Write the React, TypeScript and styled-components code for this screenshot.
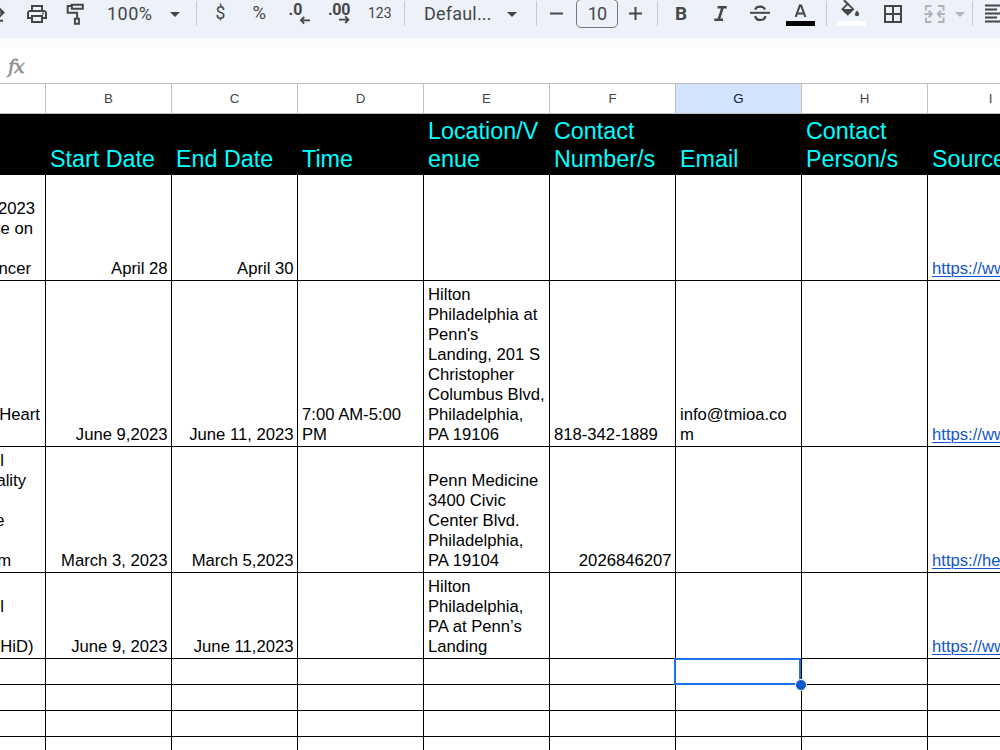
import React from 'react';
import styled, { createGlobalStyle } from 'styled-components';
import { MdOutlinePrint } from 'react-icons/md';

const INK = '#444746';

const GlobalStyle = createGlobalStyle`
  body { margin: 0; background: #fff; overflow: hidden; }
  * { box-sizing: border-box; }
`;

const Page = styled.div`
  width: 1000px;
  height: 750px;
  overflow: hidden;
  display: flex;
  flex-direction: column;
  background: #fff;
  font-family: 'Liberation Sans', Arial, sans-serif;
`;

const Toolbar = styled.div`
  height: 38px;
  flex: none;
  display: flex;
  background: #edf1fa;
  color: ${INK};
  font-family: Roboto, sans-serif;
`;

const Slot = styled.div<{ $w: number; $pad?: number }>`
  width: ${(p) => p.$w}px;
  padding-left: ${(p) => p.$pad ?? 0}px;
  height: 27px;
  flex: none;
  display: flex;
  align-items: center;
  white-space: nowrap;
`;

const Label = styled.span<{ $size: number; $track?: number; $bold?: boolean }>`
  font-size: ${(p) => p.$size}px;
  line-height: 27px;
  letter-spacing: ${(p) => p.$track ?? 0}px;
  font-weight: ${(p) => (p.$bold ? 700 : 400)};
`;

const Divider = styled.div`
  width: 1px;
  height: 25px;
  margin-top: 1px;
  flex: none;
  background: #c7c9cc;
`;

const Glyph = styled.svg`
  display: block;
  flex: none;
`;

const SizeBox = styled.div`
  width: 42px;
  height: 29px;
  margin-top: -1px;
  flex: none;
  display: flex;
  align-items: center;
  justify-content: center;
  border: 1px solid #747775;
  border-radius: 5px;
`;

const Strip = styled.div`
  height: 10px;
  flex: none;
  background: #f9fbfd;
`;

const FormulaBar = styled.div`
  height: 35px;
  flex: none;
  padding: 2px 0 0 8px;
  display: flex;
  align-items: center;
  color: #8b8e8c;
  font: italic 19px/33px 'DejaVu Serif', serif;
  letter-spacing: -1px;
  -webkit-text-stroke: 0.5px #8b8e8c;
`;

const Grid = styled.div`
  width: 1054px;
  flex: none;
  display: grid;
  grid-template-columns: 46px repeat(8, 126px);
`;

const ColumnHead = styled.div<{ $active?: boolean }>`
  height: 31px;
  border: solid #c0c0c0;
  border-width: 1px 1px 1px 0;
  display: flex;
  align-items: center;
  justify-content: center;
  font: 13.33px/29px 'Liberation Sans', Arial, sans-serif;
  color: ${(p) => (p.$active ? '#041e49' : INK)};
  background: ${(p) => (p.$active ? '#d3e3fd' : '#fff')};
`;

const TitleCell = styled.div`
  height: 61px;
  padding: 0 0 2px 4px;
  display: flex;
  flex-direction: column;
  justify-content: flex-end;
  background: #000;
  color: #0ff;
  font-size: 23.33px;
  line-height: 28px;
  white-space: pre;
`;

const Cell = styled.div<{ $h: number; $right?: boolean }>`
  position: relative;
  height: ${(p) => p.$h}px;
  padding: 0 3.5px 1px 4px;
  border: solid #000;
  border-width: 0 1px 1px 0;
  display: flex;
  flex-direction: column;
  justify-content: flex-end;
  align-items: ${(p) => (p.$right ? 'flex-end' : 'flex-start')};
  color: #000;
  font-size: 16.67px;
  line-height: 20px;
  white-space: pre;
`;

const ClippedCell = styled(Cell)`
  padding-left: 0;
  padding-right: 0;
  align-items: flex-end;
  overflow: hidden;
`;

const ClippedLine = styled.div<{ $gap: number }>`
  height: 20px;
  margin-right: ${(p) => p.$gap}px;
`;

const Link = styled.span`
  color: #1155cc;
  text-decoration: underline;
  text-decoration-thickness: 1px;
  text-underline-offset: 2px;
`;

const Selection = styled.div`
  position: absolute;
  z-index: 1;
  left: -2px;
  top: -1px;
  width: 127px;
  height: 27px;
  border: 2px solid #1a73e8;
`;

const Handle = styled.div`
  position: absolute;
  right: -8px;
  bottom: -8px;
  width: 12px;
  height: 12px;
  border: 1px solid #fff;
  border-radius: 50%;
  background: #0b57d0;
`;

type IconProps = { x: number; w: number; children: React.ReactNode };
const Icon = ({ x, w, children }: IconProps) => (
  <Glyph width={w} height={38} viewBox={`${x} 0 ${w} 38`} fill="none" stroke={INK} strokeWidth={2}>
    {children}
  </Glyph>
);

const Caret = ({ x, w, left, color = INK }: { x: number; w: number; left: number; color?: string }) => (
  <Icon x={x} w={w}>
    <path d={`M${left} 12h10l-5 5z`} fill={color} stroke="none" />
  </Icon>
);

const columns = ['', 'B', 'C', 'D', 'E', 'F', 'G', 'H', 'I'];
const titles = ['', 'Start Date', 'End Date', 'Time', 'Location/V\nenue', 'Contact\nNumber/s', 'Email', 'Contact\nPerson/s', 'Source'];

type Line = [string, number];
type Row = { h: number; first: Line[]; cells: string[]; phoneRight?: boolean };

const rows: Row[] = [
  {
    h: 106,
    first: [['2023', 10], ['ce on', 12], ['', 0], ['ncer', 14]],
    cells: ['April 28', 'April 30', '', '', '', '', '', 'https://www.'],
  },
  {
    h: 166,
    first: [['Heart', 5], ['', 0]],
    cells: [
      'June 9,2023',
      'June 11, 2023',
      '7:00 AM-5:00\nPM',
      "Hilton\nPhiladelphia at\nPenn's\nLanding, 201 S\nChristopher\nColumbus Blvd,\nPhiladelphia,\nPA 19106",
      '818-342-1889',
      'info@tmioa.co\nm',
      '',
      'https://www.',
    ],
  },
  {
    h: 126,
    first: [['l', 41], ['ality', 19], ['', 0], ['e', 40.5], ['', 0], ['m', 34]],
    cells: [
      'March 3, 2023',
      'March 5,2023',
      '',
      'Penn Medicine\n3400 Civic\nCenter Blvd.\nPhiladelphia,\nPA 19104',
      '2026846207',
      '',
      '',
      'https://hea',
    ],
    phoneRight: true,
  },
  {
    h: 86,
    first: [['l', 41], ['', 0], ['HiD)', 11.5]],
    cells: ['June 9, 2023', 'June 11,2023', '', 'Hilton\nPhiladelphia,\nPA at Penn’s\nLanding', '', '', '', 'https://www.'],
  },
];

const emptyRows = [0, 1, 2, 3];

export default function App() {
  return (
    <Page>
      <GlobalStyle />
      <Toolbar>
        <Icon x={0} w={25}>
          <path d="M-4 12.6H3M-.6 8.4l4 4.2-4 4.2M-4 20.8H3" />
        </Icon>
        <Slot $w={36}>
          <MdOutlinePrint size={24} color={INK} />
        </Slot>
        <Icon x={61} w={46}>
          <path d="M71.8 4.7h11v4h-11zM71.8 6H67.7v6.8h9.4v5.4M74.9 18.8h4v5h-4z" />
        </Icon>
        <Slot $w={58}>
          <Label $size={18} $track={0.5}>100%</Label>
        </Slot>
        <Caret x={165} w={31} left={170} />
        <Divider />
        <Slot $w={55} $pad={18.5}>
          <Label $size={17.5}>$</Label>
        </Slot>
        <Slot $w={36} $pad={0.5}>
          <Label $size={18.5}>%</Label>
        </Slot>
        <Icon x={288} w={39}>
          <text x="288.5" y="15" fill={INK} stroke="none" fontSize="16" fontWeight="700" fontFamily="Roboto">.0</text>
          <path d="M301 20.3h9M304.2 17l-3.2 3.3 3.2 3.3" strokeWidth={1.8} />
        </Icon>
        <Icon x={327} w={41}>
          <text x="328" y="15" fill={INK} stroke="none" fontSize="16" fontWeight="700" fontFamily="Roboto" letterSpacing="-0.3">.00</text>
          <path d="M339 19.7h9M345.2 16.4l3.2 3.3-3.2 3.3" strokeWidth={1.8} />
        </Icon>
        <Slot $w={36}>
          <Label $size={14}>123</Label>
        </Slot>
        <Divider />
        <Slot $w={97} $pad={19}>
          <Label $size={18} $track={0.2}>Defaul...</Label>
        </Slot>
        <Caret x={502} w={34} left={507} />
        <Divider />
        <Icon x={537} w={39}>
          <path d="M550 13.5h13" />
        </Icon>
        <SizeBox>
          <Label $size={18} $track={-0.8}>10</Label>
        </SizeBox>
        <Icon x={618} w={39}>
          <path d="M629 13.5h13M635.5 7v13" />
        </Icon>
        <Divider />
        <Slot $w={50} $pad={17}>
          <Label $size={19} $bold>B</Label>
        </Slot>
        <Icon x={708} w={38}>
          <path d="M717.5 7.3h9.2M714.3 19.8h8.7M722.6 7.3l-4 12.5" strokeWidth={2.6} />
        </Icon>
        <Icon x={746} w={40}>
          <path d="M750 12.8h20" />
          <path d="M765 9.6c-.6-2-2.4-3-4.8-3-2.8 0-4.6 1.2-4.9 3.3M755.2 16c.4 2.6 2.3 4 5 4 3 0 5-1.4 5.1-4" strokeWidth={2.2} />
        </Icon>
        <Icon x={786} w={40}>
          <path d="M795.6 17l4.2-11.4h1.4L805.400 17M797.5 13.600h6" />
          <path d="M786 21h29v5h-29z" fill="#000" stroke="none" />
        </Icon>
        <Divider />
        <Icon x={827} w={50}>
          <path d="M844 .2l4 4" />
          <path d="M847.8 3.8l5.4 5.4-5.4 5.4-5.4-5.4z" strokeWidth={1.8} />
          <path d="M842.2 9h11.2l-5.6 5.8z" fill={INK} stroke="none" />
          <path d="M857 10.6c1.2 1.4 2.2 2.6 2.2 3.6a2.1 2.1 0 0 1-4.3 0c0-1 1-2.2 2.1-3.6z" fill={INK} stroke="none" />
          <path d="M837 21h29v5h-29z" fill="#fff" stroke="none" />
        </Icon>
        <Icon x={877} w={40}>
          <path d="M885 6h16v16h-16zM893 6v16M885 14h16" />
        </Icon>
        <Icon x={917} w={34}>
          <path
            d="M931.5 6H926v4.5M938 6h5.5v4.5M931.5 22H926v-4.5M938 22h5.5v-4.5M924.5 14h7M928.8 10.8l3 3.2-3 3.2M945 14h-7M940.8 10.8l-3 3.2 3 3.2"
            stroke="#b0b3b7"
          />
        </Icon>
        <Caret x={951} w={21} left={955} color="#b0b3b7" />
        <Divider />
        <Icon x={973} w={27}>
          <path d="M985 5.5h16M985 9.5h12M985 13.5h16M985 17.5h12M985 21.5h16" strokeWidth={1.8} />
        </Icon>
      </Toolbar>
      <Strip />
      <FormulaBar>fx</FormulaBar>
      <Grid>
        {columns.map((c) => (
          <ColumnHead key={c} $active={c === 'G'}>{c}</ColumnHead>
        ))}
        {titles.map((t, i) => (
          <TitleCell key={i}>{t}</TitleCell>
        ))}
        {rows.map((row, r) => (
          <React.Fragment key={r}>
            <ClippedCell $h={row.h}>
              {row.first.map(([text, gap], i) => (
                <ClippedLine key={i} $gap={gap}>{text}</ClippedLine>
              ))}
            </ClippedCell>
            {row.cells.map((text, i) => (
              <Cell key={i} $h={row.h} $right={i < 2 || (i === 4 && row.phoneRight)}>
                {i === 7 ? <Link>{text}</Link> : text}
              </Cell>
            ))}
          </React.Fragment>
        ))}
        {emptyRows.map((r) =>
          columns.map((c) => (
            <Cell key={`${r}${c}`} $h={26}>
              {r === 0 && c === 'G' && (
                <Selection>
                  <Handle />
                </Selection>
              )}
            </Cell>
          )),
        )}
      </Grid>
    </Page>
  );
}
